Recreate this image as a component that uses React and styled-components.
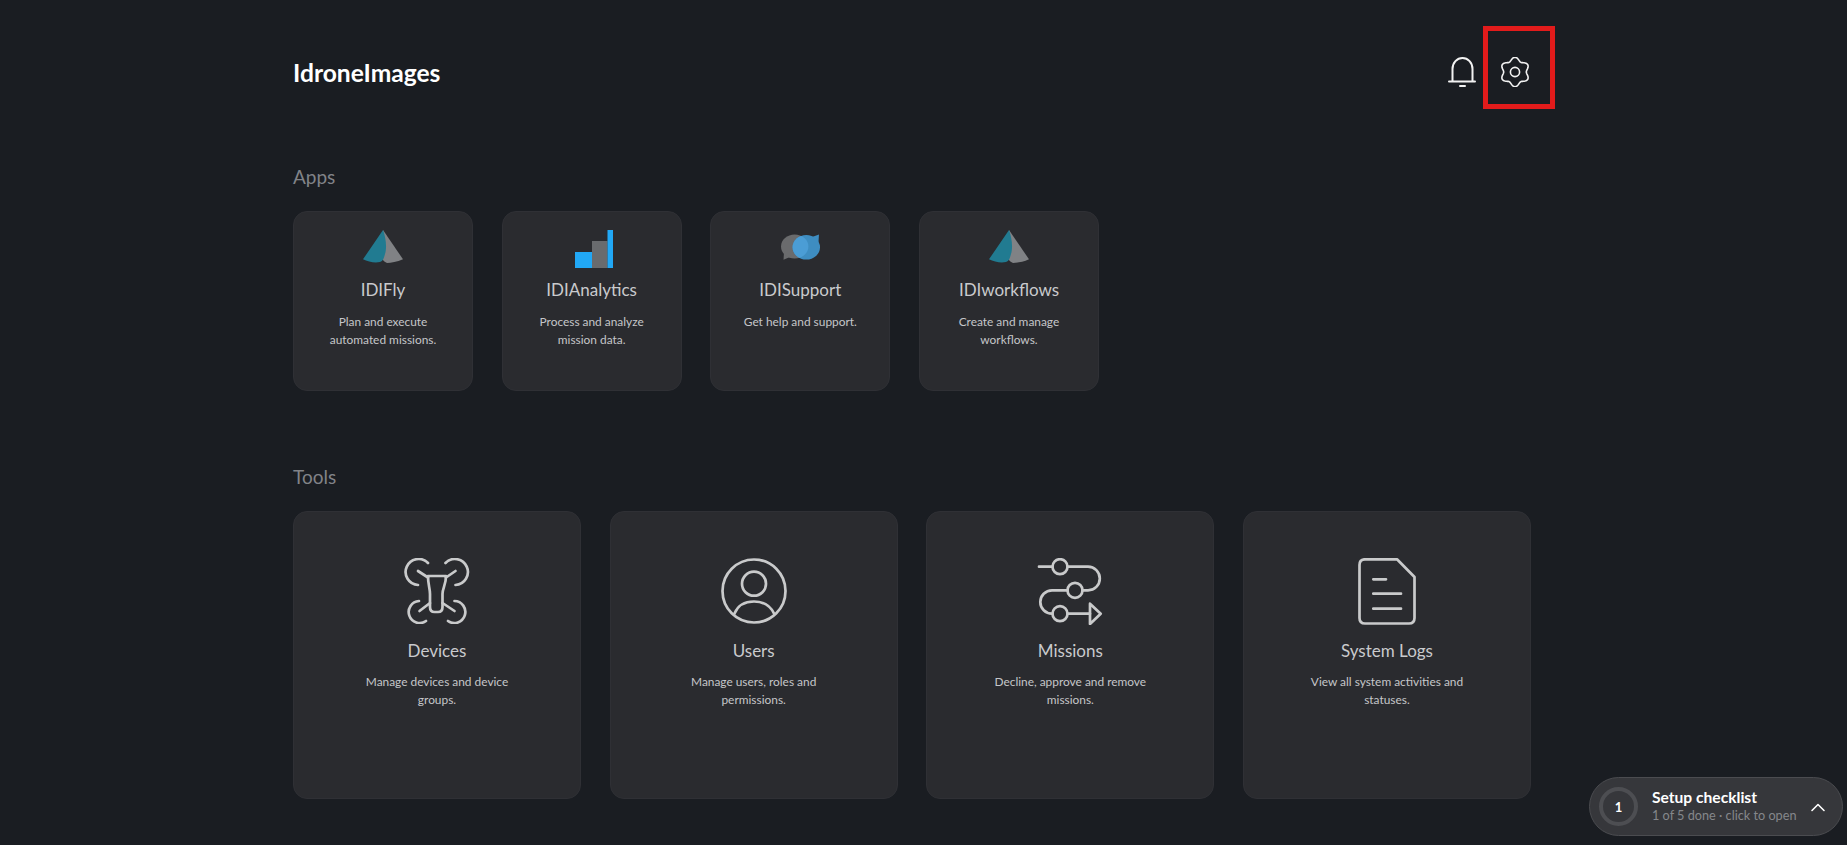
import React from "react";
import styled, { createGlobalStyle } from "styled-components";

const GlobalStyle = createGlobalStyle`
  html, body {
    margin: 0;
    padding: 0;
    background: #1a1d22;
  }
  body {
    font-family: Lato, "Open Sans", sans-serif;
    overflow: hidden;
  }
`;

const Page = styled.main`
  box-sizing: border-box;
  min-height: 100vh;
  width: 1531px;
  padding: 57px 0 40px 293px;
`;

const Header = styled.header`
  display: flex;
  justify-content: space-between;
  align-items: center;
  height: 30px;
  margin-bottom: 79px;
`;

const Logo = styled.h1`
  margin: 0;
  font-size: 24.6px;
  font-weight: 700;
  color: #fff;
`;

const HeaderIcons = styled.div`
  display: flex;
  align-items: center;
  gap: 24px;
  padding-right: 1px;
`;

const IconButton = styled.button`
  position: relative;
  display: flex;
  padding: 0;
  border: 0;
  background: none;
  color: #f2f2f2;
`;

// red annotation box drawn over the screenshot
const Highlight = styled.span`
  position: absolute;
  left: -17px;
  top: -31px;
  width: 62px;
  height: 73px;
  border: 5px solid #e21b1b;
`;

const SectionLabel = styled.h2`
  margin: 0 0 23px;
  font-size: 19px;
  line-height: 22px;
  font-weight: 400;
  color: #818388;
`;

const AppGrid = styled.div`
  display: grid;
  grid-template-columns: repeat(4, 180px);
  gap: 28.67px;
  margin-bottom: 75px;
`;

const ToolGrid = styled.div`
  display: grid;
  grid-template-columns: repeat(4, 288px);
  gap: 28.67px;
`;

const Card = styled.a`
  box-sizing: border-box;
  display: flex;
  flex-direction: column;
  align-items: center;
  height: ${(p) => (p.$large ? 288 : 180)}px;
  padding: ${(p) => (p.$large ? "46px 65px 0" : "18px 29px 0")};
  border: 1px solid #2f3035;
  border-radius: 14px;
  background: #2a2b2f;
  text-align: center;
`;

const IconSlot = styled.div`
  display: flex;
  align-items: flex-start;
  justify-content: center;
  height: ${(p) => (p.$large ? 66 : 38)}px;
  color: #c9cacb;
`;

const CardTitle = styled.h3`
  margin: ${(p) => (p.$large ? "16px 0 11px" : "11px 0 12px")};
  font-size: 17px;
  line-height: 22px;
  font-weight: 400;
  color: #c9cacd;
`;

const CardText = styled.p`
  margin: 0;
  font-size: 11.9px;
  line-height: 18px;
  color: #c5c6c9;
`;

const Checklist = styled.button`
  position: fixed;
  right: 4px;
  bottom: 9px;
  box-sizing: border-box;
  display: flex;
  align-items: center;
  width: 254px;
  height: 59px;
  padding: 0 16px 0 9px;
  border: 1px solid #4b4c50;
  border-radius: 30px;
  background: #36373b;
  font-family: inherit;
  text-align: left;
`;

const Ring = styled.span`
  box-sizing: border-box;
  display: flex;
  align-items: center;
  justify-content: center;
  flex: none;
  width: 39px;
  height: 39px;
  margin-right: 14px;
  border: 4px solid #4d4e52;
  border-radius: 50%;
  color: #fff;
  font-size: 13px;
  font-weight: 700;
`;

const ChecklistText = styled.span`
  display: flex;
  flex: 1;
  flex-direction: column;
  margin-top: -1px;
`;

const ChecklistTitle = styled.span`
  font-size: 15.6px;
  line-height: 18px;
  font-weight: 700;
  color: #fff;
`;

const ChecklistSub = styled.span`
  font-size: 12.7px;
  line-height: 18px;
  color: #85878b;
`;

const Chevron = styled.svg`
  display: block;
  fill: none;
  stroke: #fff;
  stroke-width: 1.6px;
  stroke-linecap: round;
  stroke-linejoin: round;
`;

const Line = styled.svg`
  display: block;
  fill: none;
  stroke: currentColor;
  stroke-width: ${(p) => p.$weight || 2.7}px;
  stroke-linecap: round;
  stroke-linejoin: round;
`;

const BellIcon = () => (
  <Line width="28" height="30" viewBox="0 0 28 30" $weight={2}>
    <path d="M4.500 24V12C4.500 5.500 9 1 14.500 1S24.500 5.500 24.500 12V24" />
    <path d="M1 24.500H27" />
    <path d="M12 29H17" />
  </Line>
);

// wavy six tooth outline
const gearPath = () => {
  const points = [];
  for (let i = 0; i < 120; i++) {
    const a = (i / 120) * Math.PI * 2;
    const r = 13 + 1.7 * Math.cos(6 * (a + Math.PI / 2));
    points.push(`${(15 + r * Math.cos(a)).toFixed(2)} ${(15 + r * Math.sin(a)).toFixed(2)}`);
  }
  return `M${points.join("L")}Z`;
};

const GearIcon = () => (
  <Line width="30" height="30" viewBox="0 0 30 30" $weight={1.6}>
    <path d={gearPath()} />
    <circle cx="15" cy="15" r="4.600" />
  </Line>
);

const DroneIcon = () => (
  <Line width="66" height="66" viewBox="0 0 66 66">
    <path d="M24 5A13 13 0 1 0 14 27" />
    <path d="M41.500 5A13 13 0 1 1 51.500 27" />
    <path d="M15 43A11 11 0 1 0 22 63" />
    <path d="M50.500 43A11 11 0 1 1 44 63" />
    <path d="M24 18H42C42 27 38.500 30 38.500 36V49Q38.500 54 34 54H30.500Q26 54 26 49V36C26 30 24 27 24 18Z" />
    <path d="M14 13L24 19.500M51.500 13L42 19.500M15.500 53L26 45M50.500 53L38.500 45" />
  </Line>
);

const UserIcon = () => (
  <Line width="66" height="66" viewBox="0 0 66 66">
    <circle cx="33" cy="33" r="31.500" />
    <circle cx="33" cy="25.700" r="12" />
    <path d="M13.500 55.500C17 47 25 43.500 33 43.500S49 47 53 55.500" />
  </Line>
);

const MissionIcon = () => (
  <Line width="66" height="67" viewBox="0 0 66 67">
    <path d="M2 8.700H15.500M30.500 8.700H51A11.800 11.800 0 0 1 51 32.300H45.500M30.500 32.300H15A11.700 11.700 0 0 0 15 55.700H15.500M30.500 55.700H53" />
    <circle cx="23" cy="8.700" r="7.500" />
    <circle cx="38" cy="32.300" r="7.500" />
    <circle cx="23" cy="55.700" r="7.500" />
    <path d="M53 45.700L63.700 55.700L53 66Z" />
  </Line>
);

const LogIcon = () => (
  <Line width="66" height="67" viewBox="0 0 66 67">
    <path d="M11 1.300H43L60.500 19V60Q60.500 65.500 55 65.500H11Q5.500 65.500 5.500 60V7Q5.500 1.300 11 1.300Z" />
    <path d="M19.300 21.300H32M19.300 35.700H47M19.300 50.700H47" />
  </Line>
);

const TentLogo = () => (
  <svg width="40" height="34" viewBox="0 0 40 34">
    <path fill="#808285" d="M20 0L40 29.300C34 32 28 33 24 33C22 32 20.500 31 19.500 29.500Z" />
    <path fill="#217b91" d="M20 0C23 8 24 18 22 24C21 28 20 31 17 32C12 33 5 32 0 29.300Z" />
  </svg>
);

const BarsLogo = () => (
  <svg width="42" height="38" viewBox="-4 0 42 38">
    <rect x="0" y="22" width="17" height="16" fill="#21a8f6" />
    <rect x="17" y="11" width="15.500" height="27" fill="#696b6e" />
    <rect x="32.500" y="0" width="5.500" height="38" fill="#21a8f6" />
  </svg>
);

const ChatLogo = () => (
  <svg width="42" height="30" viewBox="-2 -4 42 30">
    <defs>
      <clipPath id="chat-overlap">
        <ellipse cx="13.700" cy="12.500" rx="13.700" ry="12" />
      </clipPath>
    </defs>
    <path fill="#6a6b6d" d="M2.500 25.800L3 18L9 23Z" />
    <ellipse cx="13.700" cy="12.500" rx="13.700" ry="12" fill="#6a6b6d" />
    <path fill="#3e8dc1" d="M38 0.500L37.500 8L31 3Z" />
    <ellipse cx="25.300" cy="13.300" rx="13.700" ry="12.300" fill="#3e8dc1" />
    <ellipse cx="25.300" cy="13.300" rx="13.700" ry="12.300" fill="#4b9dd5" clipPath="url(#chat-overlap)" />
  </svg>
);

const apps = [
  { name: "IDIFly", text: "Plan and execute automated missions.", Icon: TentLogo },
  { name: "IDIAnalytics", text: "Process and analyze mission data.", Icon: BarsLogo },
  { name: "IDISupport", text: "Get help and support.", Icon: ChatLogo },
  { name: "IDIworkflows", text: "Create and manage workflows.", Icon: TentLogo },
];

const tools = [
  { name: "Devices", text: "Manage devices and device groups.", Icon: DroneIcon },
  { name: "Users", text: "Manage users, roles and permissions.", Icon: UserIcon },
  { name: "Missions", text: "Decline, approve and remove missions.", Icon: MissionIcon },
  { name: "System Logs", text: "View all system activities and statuses.", Icon: LogIcon },
];

const Tile = ({ item, large }) => (
  <Card $large={large}>
    <IconSlot $large={large}>
      <item.Icon />
    </IconSlot>
    <CardTitle $large={large}>{item.name}</CardTitle>
    <CardText>{item.text}</CardText>
  </Card>
);

const App = () => {
  return (
    <>
      <GlobalStyle />
      <Page>
        <Header>
          <Logo>IdroneImages</Logo>
          <HeaderIcons>
            <IconButton>
              <BellIcon />
            </IconButton>
            <IconButton>
              <GearIcon />
              <Highlight />
            </IconButton>
          </HeaderIcons>
        </Header>
        <SectionLabel>Apps</SectionLabel>
        <AppGrid>
          {apps.map((item) => (
            <Tile key={item.name} item={item} />
          ))}
        </AppGrid>
        <SectionLabel>Tools</SectionLabel>
        <ToolGrid>
          {tools.map((item) => (
            <Tile key={item.name} item={item} large />
          ))}
        </ToolGrid>
      </Page>
      <Checklist>
        <Ring>1</Ring>
        <ChecklistText>
          <ChecklistTitle>Setup checklist</ChecklistTitle>
          <ChecklistSub>1 of 5 done · click to open</ChecklistSub>
        </ChecklistText>
        <Chevron width="16" height="10" viewBox="0 0 16 10">
          <path d="M2 8.500L8 2.500L14 8.500" />
        </Chevron>
      </Checklist>
    </>
  );
};

export default App;
